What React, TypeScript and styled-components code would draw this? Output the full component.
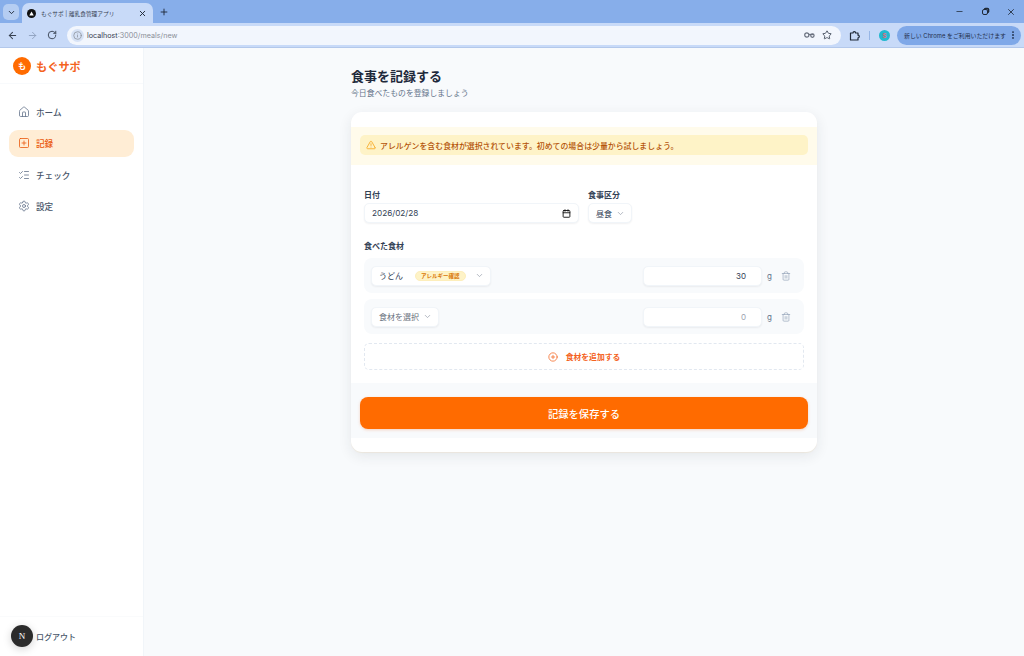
import React from "react";
import styled, { createGlobalStyle } from "styled-components";
import {
  ArrowLeft,
  ArrowRight,
  Calendar,
  ChevronDown,
  CirclePlus,
  EllipsisVertical,
  House,
  Info,
  ListChecks,
  Minus,
  Plus,
  RotateCw,
  Settings,
  SquarePlus,
  Star,
  Trash2,
  TriangleAlert,
  X,
} from "lucide-react";

const GlobalStyle = createGlobalStyle`
  html, body {
    margin: 0;
    padding: 0;
    height: 100%;
    overflow: hidden;
  }
  #root {
    height: 100%;
  }
  * {
    box-sizing: border-box;
  }
  body {
    font-family: Inter, "Noto Sans CJK JP", sans-serif;
    color: #1e293b;
    background: #f8fafc;
  }
`;

const Screen = styled.div`
  width: 1024px;
  height: 656px;
  display: flex;
  flex-direction: column;
`;

const TabStrip = styled.div`
  height: 23px;
  flex: none;
  background: #87aeea;
  display: flex;
  align-items: flex-end;
  padding-left: 3px;
  color: #1f2937;
`;

const TabSearch = styled.div`
  width: 16px;
  height: 16px;
  margin: 0 3px 3px 0;
  border-radius: 5px;
  background: #b5cdf2;
  display: flex;
  align-items: center;
  justify-content: center;
`;

const Tab = styled.div`
  width: 131px;
  height: 20px;
  background: #c8daf8;
  border-radius: 7px 7px 0 0;
  display: flex;
  align-items: center;
  padding: 0 6px 0 5px;
  gap: 5px;
`;

const Favicon = styled.span`
  width: 9px;
  height: 9px;
  border-radius: 50%;
  background: #111;
  flex: none;
  display: flex;
  align-items: center;
  justify-content: center;
`;

const TabTitle = styled.span`
  flex: 1;
  font-size: 5.7px;
  color: #374151;
  white-space: nowrap;
`;

const NewTab = styled.div`
  margin: 0 0 3px 6px;
  height: 16px;
  display: flex;
  align-items: center;
`;

const WindowButtons = styled.div`
  margin-left: auto;
  height: 23px;
  width: 69px;
  padding-right: 8px;
  display: flex;
  align-items: center;
  justify-content: space-between;
`;

const RestoreIcon = styled.span`
  width: 6px;
  height: 6px;
  border: 1.2px solid #1f2937;
  border-radius: 2px;
  box-shadow: 1.5px -1.5px 0 -0.2px #1f2937;
`;

const Toolbar = styled.div`
  height: 25px;
  flex: none;
  background: #c8daf8;
  border-bottom: 1px solid #b3c8eb;
  display: flex;
  align-items: center;
  padding: 0 3px 0 7px;
  color: #374151;
`;

const NavIcons = styled.div`
  display: flex;
  align-items: center;
  gap: 9px;
  margin-right: 10px;
`;

const AddressBar = styled.div`
  width: 774px;
  flex: none;
  height: 19px;
  border-radius: 10px;
  background: #f2f6fd;
  display: flex;
  align-items: center;
  padding: 0 9px 0 4px;
  font-size: 7.2px;
  color: #8a8f98;
`;

const SiteInfo = styled.span`
  width: 13px;
  height: 13px;
  border-radius: 50%;
  background: #d6e2f6;
  display: flex;
  align-items: center;
  justify-content: center;
  margin-right: 3px;
`;

const Host = styled.span`
  color: #374151;
`;

const AddressActions = styled.div`
  margin-left: auto;
  display: flex;
  align-items: center;
  gap: 7px;
`;

const Extension = styled.div`
  margin-left: 8px;
  display: flex;
  align-items: center;
`;

const ToolbarDivider = styled.span`
  width: 1px;
  height: 9px;
  background: #97b6e6;
  margin: 0 9px 0 9px;
`;

const ProfileDot = styled.span`
  width: 11px;
  height: 11px;
  flex: none;
  border-radius: 50%;
  background: #22b8cf;
  display: flex;
  align-items: center;
  justify-content: center;
  font-size: 6px;
  color: #e5677b;
  font-weight: 700;
  margin-right: 7px;
`;

const UpdatePill = styled.div`
  flex: 1;
  height: 19px;
  border-radius: 10px;
  background: #7fa8e8;
  display: flex;
  align-items: center;
  justify-content: space-between;
  padding: 0 3px 0 7px;
  font-size: 5.9px;
  color: #1f2f4a;
  white-space: nowrap;
`;

const AppBody = styled.div`
  flex: 1;
  min-height: 0;
  display: flex;
`;

const Sidebar = styled.aside`
  width: 144px;
  flex: none;
  background: #fff;
  border-right: 1px solid #f1f5f9;
  display: flex;
  flex-direction: column;
`;

const Brand = styled.div`
  height: 36px;
  flex: none;
  border-bottom: 1px solid #f8fafc;
  display: flex;
  align-items: center;
  gap: 5px;
  padding-left: 13px;
`;

const BrandMark = styled.span`
  width: 18px;
  height: 18px;
  border-radius: 50%;
  background: #ff6b00;
  color: #fff;
  font-size: 8px;
  font-weight: 700;
  display: flex;
  align-items: center;
  justify-content: center;
`;

const BrandName = styled.span`
  font-size: 11.2px;
  font-weight: 700;
  color: #f4631e;
`;

const Nav = styled.nav`
  flex: 1;
  display: flex;
  flex-direction: column;
  gap: 4.5px;
  padding: 14px 9px 0;
`;

const NavItem = styled.div<{ $active?: boolean }>`
  height: 27px;
  flex: none;
  border-radius: 9px;
  display: flex;
  align-items: center;
  gap: 6px;
  padding-left: 9px;
  font-size: 8.6px;
  font-weight: 500;
  background: ${(p) => (p.$active ? "#ffedd5" : "transparent")};
  color: ${(p) => (p.$active ? "#ea580c" : "#475569")};
`;

const NavIcon = styled.span<{ $active?: boolean }>`
  display: flex;
  color: ${(p) => (p.$active ? "#ea580c" : "#64748b")};
`;

const SidebarFooter = styled.div`
  height: 40px;
  flex: none;
  border-top: 1px solid #fafbfc;
  display: flex;
  align-items: center;
  padding: 0 0 1px 11px;
  gap: 3px;
  font-size: 8px;
  font-weight: 500;
  color: #475569;
`;

const DevBadge = styled.span`
  width: 22px;
  height: 22px;
  border-radius: 50%;
  background: #2b2b2b;
  color: #fff;
  font-family: "Liberation Serif", serif;
  font-size: 9px;
  font-weight: 400;
  display: flex;
  align-items: center;
  justify-content: center;
  box-shadow: 0 2px 8px rgba(0, 0, 0, 0.18);
`;

const Main = styled.main`
  flex: 1;
  display: flex;
  justify-content: center;
  padding-top: 20px;
`;

const Column = styled.div`
  width: 466px;
`;

const PageTitle = styled.h1`
  margin: 0;
  font-size: 13px;
  line-height: 16px;
  font-weight: 700;
  color: #1e293b;
`;

const PageSubtitle = styled.p`
  margin: 3px 0 0;
  font-size: 7.85px;
  line-height: 12px;
  color: #64748b;
`;

const Card = styled.section`
  margin-top: 13px;
  height: 340px;
  background: #fff;
  border-radius: 11px;
  padding-top: 15px;
  box-shadow: 0 1px 1px rgba(245, 158, 11, 0.08), 0 4px 14px rgba(30, 41, 59, 0.09);
`;

const AlertBand = styled.div`
  height: 38px;
  background: #fffbeb;
  padding: 8px 9px 0;
`;

const AlertBox = styled.div`
  height: 20px;
  border-radius: 5px;
  background: #fef3c7;
  display: flex;
  align-items: center;
  gap: 4px;
  padding-left: 6px;
  font-size: 7.9px;
  font-weight: 500;
  color: #b45309;
`;

const Form = styled.div`
  height: 218px;
  padding: 25px 13px 0;
  display: flex;
  flex-direction: column;
`;

const FieldRow = styled.div`
  display: flex;
  gap: 9px;
`;

const Field = styled.div<{ $width?: number }>`
  display: flex;
  flex-direction: column;
  gap: 3px;
  flex: none;
  width: ${(p) => (p.$width ? `${p.$width}px` : "auto")};
`;

const FieldLabel = styled.label`
  font-size: 8px;
  line-height: 10px;
  font-weight: 600;
  color: #334155;
`;

const Control = styled.div`
  height: 20px;
  background: #fff;
  border-radius: 5px;
  border: 1px solid #f1f5f9;
  box-shadow: 0 1px 2px rgba(15, 23, 42, 0.06);
  display: flex;
  align-items: center;
  font-size: 8px;
  color: #334155;
`;

const DateControl = styled(Control)`
  justify-content: space-between;
  padding: 0 7px;
  font-size: 8.2px;
`;

const SelectControl = styled(Control)<{ $muted?: boolean }>`
  width: max-content;
  gap: 4px;
  padding: 0 6px 0 7px;
  color: ${(p) => (p.$muted ? "#6b7280" : "#334155")};
`;

const Chevron = styled(ChevronDown)`
  color: #9ca3af;
`;

const IngredientsLabel = styled(FieldLabel)`
  margin: 18px 0 7px;
`;

const IngredientRow = styled.div`
  height: 35px;
  flex: none;
  background: #f8fafc;
  border-radius: 8px;
  display: flex;
  align-items: center;
  padding: 0 13px 0 7px;
  margin-bottom: 6px;
`;

const AllergyTag = styled.span`
  height: 10px;
  padding: 0 5px;
  margin: 0 5px 0 8px;
  border-radius: 5px;
  background: #fef3c7;
  border: 1px solid #fdeebb;
  color: #d97706;
  font-size: 5.5px;
  font-weight: 600;
  display: flex;
  align-items: center;
`;

const AmountInput = styled(Control)<{ $empty?: boolean }>`
  width: 119px;
  margin-left: auto;
  justify-content: flex-end;
  padding-right: 15px;
  color: ${(p) => (p.$empty ? "#9ca3af" : "#334155")};
`;

const Unit = styled.span`
  font-size: 8px;
  color: #64748b;
  margin: 0 9px 0 5px;
`;

const TrashIcon = styled(Trash2)`
  color: #94a3b8;
`;

const AddButton = styled.div`
  height: 27px;
  margin-top: 3px;
  flex: none;
  border: 1px dashed #e2e8f0;
  border-radius: 5px;
  display: flex;
  align-items: center;
  justify-content: center;
  gap: 8px;
  font-size: 7.8px;
  font-weight: 600;
  color: #f4631e;
`;

const Footer = styled.div`
  height: 55px;
  background: #f8fafc;
  padding: 14px 9px 0;
`;

const SaveButton = styled.button`
  width: 100%;
  height: 32px;
  border: 0;
  border-radius: 8px;
  background: #ff6b00;
  color: #fff;
  font-family: inherit;
  font-size: 10.3px;
  font-weight: 500;
  box-shadow: 0 1px 3px rgba(234, 88, 12, 0.25);
`;

const App: React.FC = () => {
  return (
    <Screen>
      <GlobalStyle />
      <TabStrip>
        <TabSearch>
          <ChevronDown size={9} strokeWidth={2.5} />
        </TabSearch>
        <Tab>
          <Favicon>
            <svg width="5" height="5" viewBox="0 0 10 10">
              <path d="M5 1 L9.5 9 H0.5 Z" fill="#fff" />
            </svg>
          </Favicon>
          <TabTitle>もぐサポ | 離乳食管理アプリ</TabTitle>
          <X size={9} strokeWidth={2.5} />
        </Tab>
        <NewTab>
          <Plus size={10} strokeWidth={2.2} />
        </NewTab>
        <WindowButtons>
          <Minus size={9} strokeWidth={2} />
          <RestoreIcon />
          <X size={10} strokeWidth={2} />
        </WindowButtons>
      </TabStrip>
      <Toolbar>
        <NavIcons>
          <ArrowLeft size={11} strokeWidth={2.2} />
          <ArrowRight size={11} strokeWidth={2} color="#8ea0bd" />
          <RotateCw size={10} strokeWidth={2.2} />
        </NavIcons>
        <AddressBar>
          <SiteInfo>
            <Info size={9} strokeWidth={2} />
          </SiteInfo>
          <Host>localhost</Host>:3000/meals/new
          <AddressActions>
            <svg width="11" height="8" viewBox="0 0 11 8" fill="none" stroke="#6b7280" strokeWidth="1.2">
              <circle cx="2.8" cy="4" r="2.1" />
              <circle cx="8.4" cy="4.6" r="1.7" />
              <path d="M4.9 3.5 H9.8" />
            </svg>
            <Star size={10} color="#374151" strokeWidth={2} />
          </AddressActions>
        </AddressBar>
        <Extension>
          <svg width="11" height="11" viewBox="0 0 11 11" fill="none" stroke="#1f2937" strokeWidth="1.2" strokeLinejoin="round">
            <path d="M1.5 3 H4 A1.3 1.3 0 0 1 6.6 3 H9 V5.2 A1.3 1.3 0 0 1 9 7.8 V10 H1.5 Z" />
          </svg>
        </Extension>
        <ToolbarDivider />
        <ProfileDot>S</ProfileDot>
        <UpdatePill>
          新しい Chrome をご利用いただけます
          <EllipsisVertical size={10} strokeWidth={2.5} />
        </UpdatePill>
      </Toolbar>
      <AppBody>
        <Sidebar>
          <Brand>
            <BrandMark>も</BrandMark>
            <BrandName>もぐサポ</BrandName>
          </Brand>
          <Nav>
            <NavItem>
              <NavIcon>
                <House size={12} strokeWidth={1.6} />
              </NavIcon>
              ホーム
            </NavItem>
            <NavItem $active>
              <NavIcon $active>
                <SquarePlus size={12} strokeWidth={1.6} />
              </NavIcon>
              記録
            </NavItem>
            <NavItem>
              <NavIcon>
                <ListChecks size={12} strokeWidth={1.6} />
              </NavIcon>
              チェック
            </NavItem>
            <NavItem>
              <NavIcon>
                <Settings size={12} strokeWidth={1.6} />
              </NavIcon>
              設定
            </NavItem>
          </Nav>
          <SidebarFooter>
            <DevBadge>N</DevBadge>
            ログアウト
          </SidebarFooter>
        </Sidebar>
        <Main>
          <Column>
            <PageTitle>食事を記録する</PageTitle>
            <PageSubtitle>今日食べたものを登録しましょう</PageSubtitle>
            <Card>
              <AlertBand>
                <AlertBox>
                  <TriangleAlert size={10} color="#f59e0b" strokeWidth={1.8} />
                  アレルゲンを含む食材が選択されています。初めての場合は少量から試しましょう。
                </AlertBox>
              </AlertBand>
              <Form>
                <FieldRow>
                  <Field $width={215}>
                    <FieldLabel>日付</FieldLabel>
                    <DateControl>
                      2026/02/28
                      <Calendar size={9} color="#111" strokeWidth={2.4} />
                    </DateControl>
                  </Field>
                  <Field>
                    <FieldLabel>食事区分</FieldLabel>
                    <SelectControl>
                      昼食
                      <Chevron size={9} />
                    </SelectControl>
                  </Field>
                </FieldRow>
                <IngredientsLabel>食べた食材</IngredientsLabel>
                <IngredientRow>
                  <SelectControl>
                    うどん
                    <AllergyTag>アレルギー確認</AllergyTag>
                    <Chevron size={9} />
                  </SelectControl>
                  <AmountInput>30</AmountInput>
                  <Unit>g</Unit>
                  <TrashIcon size={10} strokeWidth={1.6} />
                </IngredientRow>
                <IngredientRow>
                  <SelectControl $muted>
                    食材を選択
                    <Chevron size={9} />
                  </SelectControl>
                  <AmountInput $empty>0</AmountInput>
                  <Unit>g</Unit>
                  <TrashIcon size={10} strokeWidth={1.6} />
                </IngredientRow>
                <AddButton>
                  <CirclePlus size={10} strokeWidth={1.8} />
                  食材を追加する
                </AddButton>
              </Form>
              <Footer>
                <SaveButton>記録を保存する</SaveButton>
              </Footer>
            </Card>
          </Column>
        </Main>
      </AppBody>
    </Screen>
  );
};

export default App;
